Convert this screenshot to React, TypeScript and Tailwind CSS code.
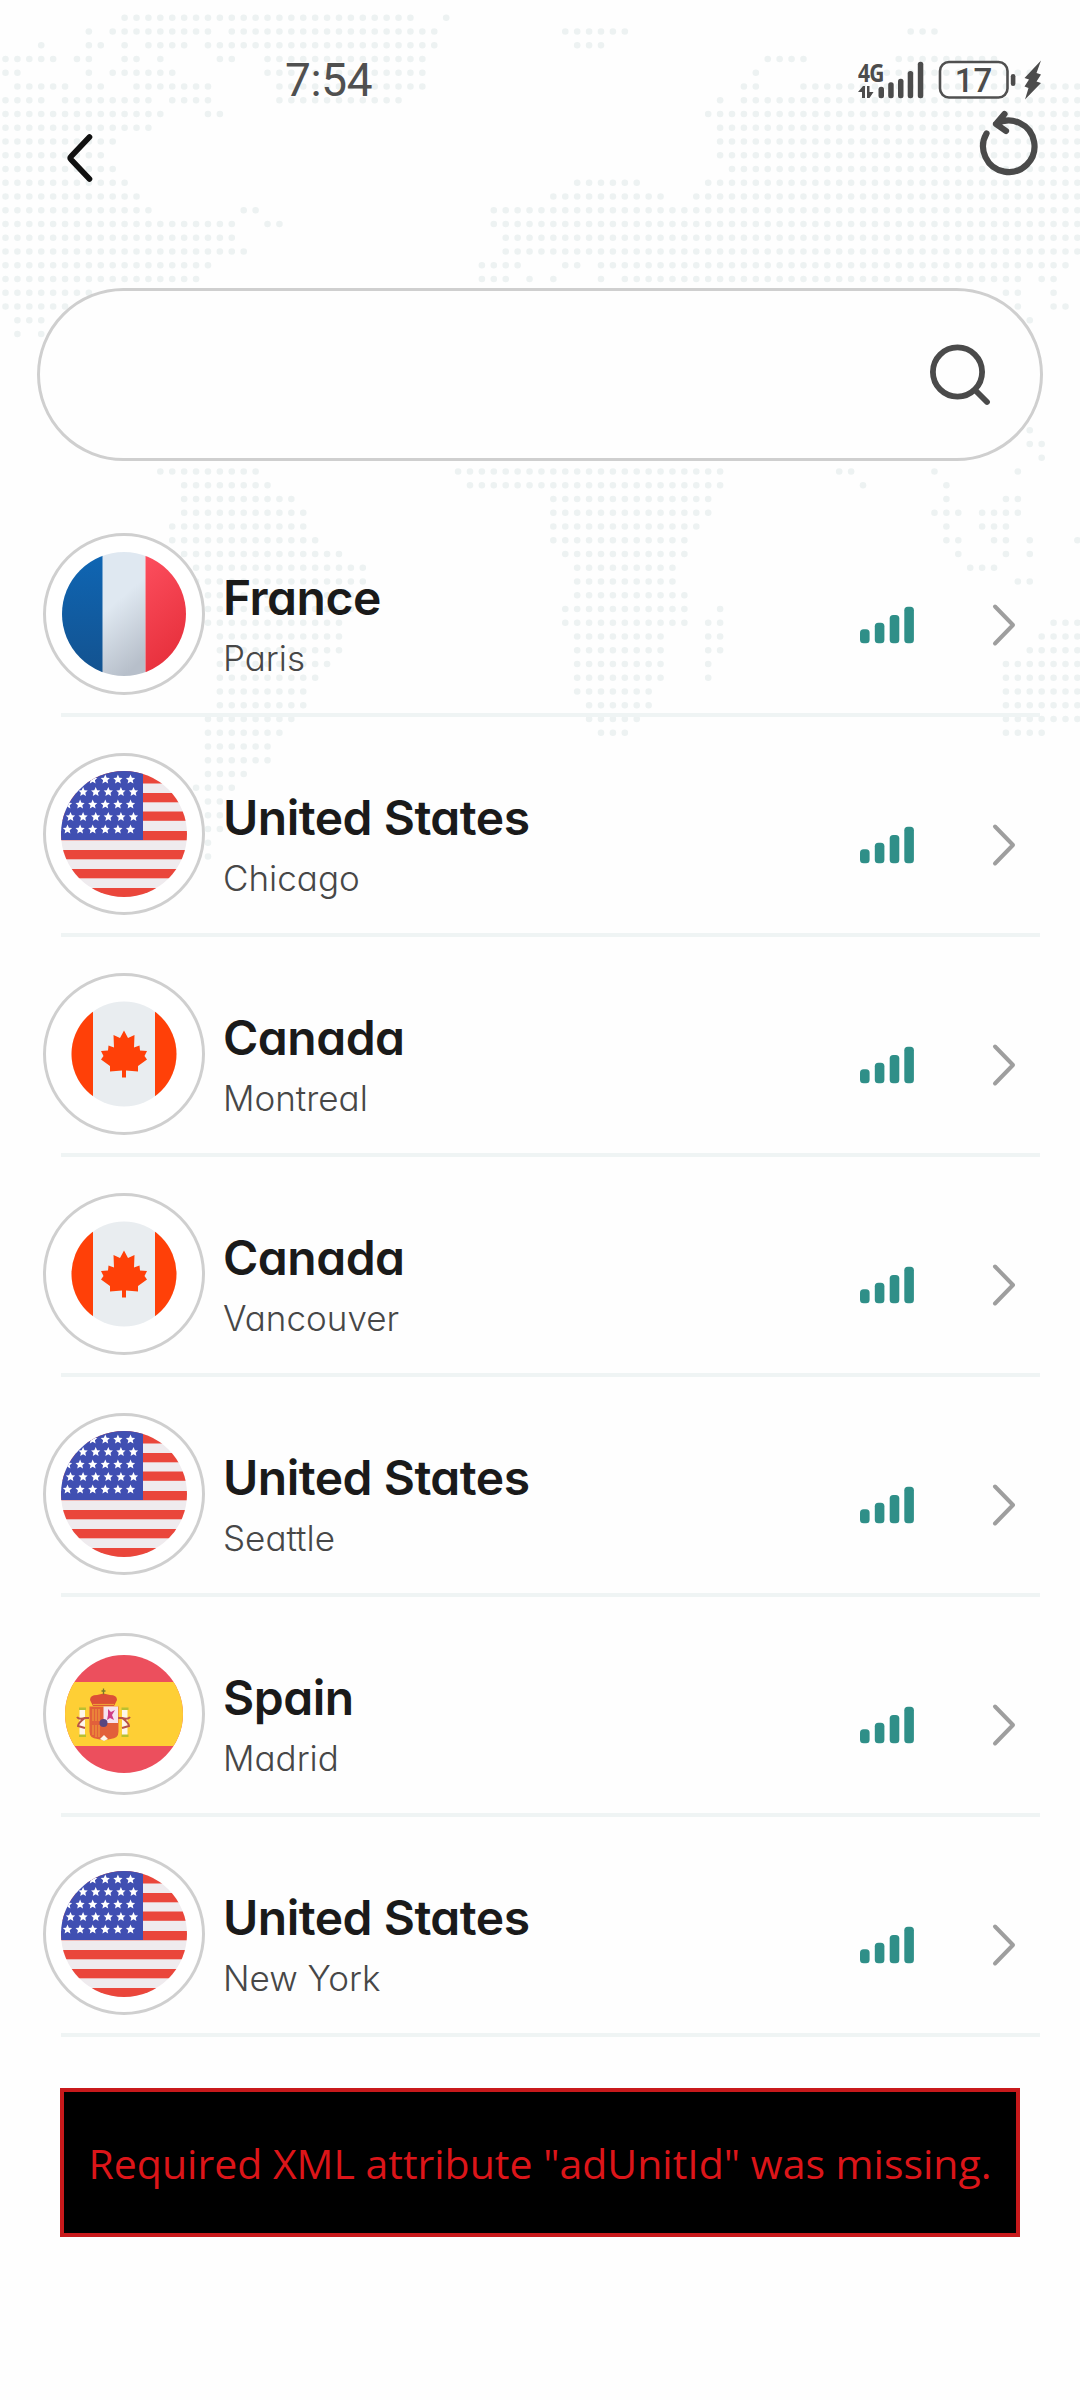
import { ReactNode } from "react";

type FlagCode = "fr" | "us" | "ca" | "es";

interface Server {
  id: number;
  country: string;
  city: string;
  flag: FlagCode;
}

const SERVERS: Server[] = [
  { id: 1, country: "France", city: "Paris", flag: "fr" },
  { id: 2, country: "United States", city: "Chicago", flag: "us" },
  { id: 3, country: "Canada", city: "Montreal", flag: "ca" },
  { id: 4, country: "Canada", city: "Vancouver", flag: "ca" },
  { id: 5, country: "United States", city: "Seattle", flag: "us" },
  { id: 6, country: "Spain", city: "Madrid", flag: "es" },
  { id: 7, country: "United States", city: "New York", flag: "us" },
];

// Dotted world map: row number -> [first column, last column] runs
const MAP_ROWS: Record<number, number[][]> = {
  0: [[10, 34], [37, 37]],
  1: [[7, 7], [9, 17], [19, 36], [47, 52], [76, 78]],
  2: [[3, 3], [7, 8], [10, 10], [12, 15], [17, 36], [48, 50]],
  3: [[0, 4], [6, 7], [10, 11], [13, 13], [18, 19], [22, 35], [64, 67], [75, 83]],
  4: [[0, 1], [7, 7], [9, 14], [22, 35], [63, 63], [73, 86]],
  5: [[1, 5], [7, 8], [11, 17], [23, 35], [62, 63], [67, 90]],
  6: [[0, 3], [5, 12], [14, 17], [23, 33], [60, 60], [62, 90]],
  7: [[0, 13], [17, 18], [59, 90]],
  8: [[0, 12], [60, 90]],
  9: [[0, 9], [60, 90]],
  10: [[0, 8], [60, 90]],
  11: [[0, 9], [61, 90]],
  12: [[0, 10], [48, 53], [59, 90]],
  13: [[0, 11], [46, 55], [58, 90]],
  14: [[0, 12], [20, 21], [41, 90]],
  15: [[0, 19], [22, 23], [41, 90]],
  16: [[0, 19], [42, 90]],
  17: [[0, 20], [42, 90]],
  18: [[0, 17], [40, 43], [47, 48], [50, 89]],
  19: [[0, 16], [40, 42], [44, 44], [46, 46], [50, 50], [52, 85], [87, 88]],
  20: [[0, 7], [84, 85], [88, 88]],
  21: [[0, 5], [85, 85], [88, 89]],
  22: [[1, 3], [86, 86]],
  23: [[1, 1], [3, 3]],
  30: [[86, 86]],
  31: [[86, 87]],
  32: [[87, 87]],
  33: [[13, 21], [38, 60], [70, 71], [78, 78], [85, 85]],
  34: [[15, 22], [39, 60], [72, 72], [79, 79]],
  35: [[15, 24], [46, 59], [79, 79], [84, 85]],
  36: [[15, 25], [46, 59], [78, 80], [82, 85]],
  37: [[14, 25], [46, 58], [79, 79], [82, 84]],
  38: [[14, 26], [46, 57], [79, 80], [83, 84], [86, 86], [90, 90]],
  39: [[14, 28], [47, 57], [80, 80], [84, 84], [86, 86]],
  40: [[14, 30], [48, 56], [81, 83]],
  41: [[15, 30], [48, 56], [85, 86]],
  42: [[16, 29], [48, 57]],
  43: [[16, 29], [47, 57], [60, 60]],
  44: [[16, 28], [47, 57], [59, 60], [88, 90]],
  45: [[18, 28], [48, 55], [59, 60], [87, 90]],
  46: [[18, 28], [48, 55], [59, 60], [86, 90]],
  47: [[18, 27], [48, 55], [59, 59], [84, 90]],
  48: [[18, 26], [48, 55], [59, 59], [84, 90]],
  49: [[18, 25], [48, 54], [84, 90]],
  50: [[18, 25], [49, 54], [84, 90]],
  51: [[17, 24], [49, 53], [84, 90]],
  52: [[17, 23], [50, 52], [84, 87]],
  53: [[17, 22]],
  54: [[17, 22]],
  55: [[17, 20]],
  56: [[16, 19]],
  57: [[17, 18]],
  58: [[16, 18]],
  59: [[16, 18]],
  60: [[16, 17]],
  61: [[17, 17]],
};

const DOT_X = 11.91;
const DOT_Y = 13.75;

function WorldMap() {
  return (
    <svg className="absolute left-0 top-0" width="1080" height="900" viewBox="0 0 1080 900">
      {Object.entries(MAP_ROWS).map(([row, runs]) =>
        runs.map(([from, to]) => {
          const y = 17.7 + Number(row) * DOT_Y;
          return (
            <line
              key={`${row}-${from}`}
              x1={5.5 + from * DOT_X}
              x2={5.6 + to * DOT_X}
              y1={y}
              y2={y}
              stroke="#edf2f2"
              strokeWidth="6.6"
              strokeLinecap="round"
              strokeDasharray={`0 ${DOT_X}`}
            />
          );
        })
      )}
    </svg>
  );
}

function StatusBar() {
  return (
    <div className="flex h-[64px] items-start justify-between pl-[285px] pr-[36px]">
      <span className="-mt-px font-[Roboto] text-[46px] leading-[54px] tracking-[-0.4px] text-[#505050]">7:54</span>
      <div className="flex pt-[6px]">
        <div className="flex h-[40px] w-[26px] flex-col">
          <span className="h-[22px] origin-left scale-x-[0.84] font-['Open_Sans'] text-[25px] font-bold leading-[24px] tracking-[-1px] text-[#4c4c4c]">
            4G
          </span>
          <svg width="18" height="14" viewBox="0 0 18 14" className="mt-[4px]" fill="#4c4c4c">
            <path d="M0 6 5 0h2v12H4V6zM9 0h2.500v6h4l-4 6H9z" />
          </svg>
        </div>
        <svg width="166" height="40" viewBox="878 60 166 40" className="-ml-[6px]">
          <g fill="#4c4c4c">
            <rect x="878.500" y="86.700" width="5.500" height="11.600" rx="2.500" />
            <rect x="888.200" y="82.300" width="5.500" height="16" rx="2.500" />
            <rect x="898" y="78.700" width="5.500" height="19.600" rx="2.500" />
            <rect x="907.700" y="71" width="5.500" height="27.300" rx="2.500" />
            <rect x="917.800" y="61.700" width="5.500" height="36.600" rx="2.500" />
            <rect x="1010.800" y="74" width="4.600" height="12" rx="2.300" />
            <path d="M1041 60.500 1024.500 78l4.500 1.500-4.500 7 4 1.500-3.500 11.500L1041 83l-4.500-1.500 4.500-7-4.500-1.500z" />
          </g>
          <rect x="940" y="62" width="67.500" height="35.500" rx="9" fill="none" stroke="#505050" strokeWidth="2.600" />
          <text x="973.500" y="91.500" textAnchor="middle" fontFamily="Roboto" fontSize="33" fontWeight="500" fill="#4c4c4c">
            17
          </text>
        </svg>
      </div>
    </div>
  );
}

function Header() {
  return (
    <div className="flex h-[170px] items-start justify-between pl-[60px] pr-[36px]">
      <svg width="40" height="60" viewBox="60 128 40 60" className="mt-[10px]" fill="none">
        <path d="M89.500 137 71 156.500q-1.500 1.500 0 3L89.500 179" stroke="#111" strokeWidth="5.600" strokeLinecap="round" strokeLinejoin="round" />
      </svg>
      <svg width="70" height="76" viewBox="974 106 70 76" className="-mt-[12px]" fill="none" stroke="#4a4a4a" strokeWidth="6.200" strokeLinecap="round" strokeLinejoin="round">
        <path d="M986.500 133.500A25.700 25.700 0 1 0 996 124L1006 131M996 124 1004.500 114" />
      </svg>
    </div>
  );
}

function SearchBox() {
  return (
    <div className="relative mx-[37px] flex h-[173px] items-center justify-end rounded-full border-[3px] border-[#cfcfcf] bg-[#fefefe] pr-[47px]">
      <svg width="68" height="68" viewBox="926 341 68 68" fill="none" stroke="#4a4a4a" strokeWidth="5.800">
        <circle cx="958.500" cy="372" r="24.600" />
        <path d="m976 390 12 12" strokeLinecap="round" />
      </svg>
    </div>
  );
}

const STAR = "M0-4.600 1.400-1.500 4.600-1.200 2.200 1 2.900 4.200 0 2.500-2.900 4.200-2.200 1-4.600-1.200-1.400-1.500z";

const FLAGS: Record<FlagCode, ReactNode> = {
  fr: (
    <>
      <clipPath id="clip-fr">
        <circle r="62" />
      </clipPath>
      <linearGradient id="fr-blue" x1="0" y1="0" x2="0" y2="1">
        <stop offset="0" stopColor="#0f66b4" />
        <stop offset="1" stopColor="#13528f" />
      </linearGradient>
      <linearGradient id="fr-white" x1="0.200" y1="0" x2="0.500" y2="1">
        <stop offset="0.400" stopColor="#dfe8f1" />
        <stop offset="1" stopColor="#b7bfca" />
      </linearGradient>
      <linearGradient id="fr-red" x1="0" y1="0" x2="0.300" y2="1">
        <stop offset="0" stopColor="#fd4f5f" />
        <stop offset="1" stopColor="#e7303c" />
      </linearGradient>
      <g clipPath="url(#clip-fr)">
        <rect x="-62" y="-62" width="41" height="124" fill="url(#fr-blue)" />
        <rect x="-21.500" y="-62" width="43" height="124" fill="url(#fr-white)" />
        <rect x="21.500" y="-62" width="41" height="124" fill="url(#fr-red)" />
      </g>
    </>
  ),
  us: (
    <>
      <clipPath id="clip-us">
        <circle r="63" />
      </clipPath>
      <g clipPath="url(#clip-us)">
        <rect x="-63" y="-63" width="126" height="126" fill="#efebee" />
        {[-70, -41, -22.5, -3, 16, 35, 54].map((y, i) => (
          <rect key={y} x="-63" y={y} width="126" height={i === 0 ? 19.5 : 9.3} fill="#ea463b" />
        ))}
        <rect x="-63" y="-63" width="82" height="69" fill="#404fb2" />
        {[0, 1, 2, 3, 4].map((row) =>
          [0, 1, 2, 3, 4, 5].map((col) => (
            <path
              key={`${row}-${col}`}
              d={STAR}
              fill="#fff"
              transform={`translate(${(row % 2 ? -53.5 : -56.5) + col * 12.6} ${-54.8 + row * 12.5})`}
            />
          ))
        )}
      </g>
    </>
  ),
  ca: (
    <>
      <clipPath id="clip-ca">
        <circle r="52.500" />
      </clipPath>
      <g clipPath="url(#clip-ca)">
        <rect x="-53" y="-53" width="106" height="106" fill="#e9edf0" />
        <rect x="-53" y="-53" width="22" height="106" fill="#ff4008" />
        <rect x="31" y="-53" width="22" height="106" fill="#ff4008" />
      </g>
      <path
        d="M0-23.500 4-16 10.500-19 10-6.500 15.500-8.500 16-3.500 23-3 20.500 2 23 5.500 14 12 14 17.500 2 16.500 2 23.500-2 23.500-2 16.500-14 17.500-14 12-23 5.500-20.500 2-23-3-16-3.500-15.500-8.500-10-6.500-10.500-19-4-16z"
        fill="#ff4008"
      />
    </>
  ),
  es: (
    <>
      <clipPath id="clip-es">
        <circle r="59" />
      </clipPath>
      <g clipPath="url(#clip-es)">
        <rect x="-59" y="-59" width="118" height="118" fill="#ec4f5d" />
        <rect x="-59" y="-32" width="118" height="64" fill="#fecf35" />
      </g>
      <rect x="-44.500" y="-5" width="5.500" height="26" fill="#fdf6ea" />
      <rect x="-2" y="-5" width="5.500" height="26" fill="#fdf6ea" />
      <path d="M-45-6.500h7v2.500h-7zM-2.500-6.500h7v2.500h-7zM-45 20.500h7v2.500h-7zM-2.500 20.500h7v2.500h-7z" fill="#b8c030" />
      <path d="M-47 3q2 3 8 1h4M-39 4q-7 5-7 8l7 2M6 3q-2 3-8 1h-4M-2 4q7 5 7 8l-7 2" stroke="#b85348" strokeWidth="2" fill="none" />
      <path d="M-34.500-7.500h29v25q0 7-8 7.500l-6.500 1.500-6.500-1.500q-8-.5-8-7.500z" fill="#e2603a" />
      <path d="M-20.500-7.500H-6V9h-14.500z" fill="#f6e3f0" />
      <path d="M-16-5l3 3 4-2-3 5 2 5-4-2-3 2 1-5z" fill="#cf3d86" />
      <path d="M-31-5v12M-28-5v12M-25-5v12M-31 11v10M-28 11v12M-25 11v12" stroke="#f0a038" strokeWidth="1.100" />
      <path d="M-24 25l4-4 4 4-4 2z" fill="#fdf6ea" />
      <circle cx="-20.500" cy="9" r="4" fill="#5a4680" />
      <path d="M-31-8-34-14q0-5 7-5l6.500-1.500 6.500 1.500q7 0 7 5l-3 6z" fill="#dc4f36" />
      <path d="M-31-9.500h21" stroke="#f0a038" strokeWidth="1.200" />
      <path d="M-20.500-25.500v6M-22.500-23h4" stroke="#7a7a2a" strokeWidth="1.300" />
    </>
  ),
};

function ServerRow({ server }: { server: Server }) {
  return (
    <div className="relative h-[220px]">
      <div className="flex h-[216px] items-start pl-[43px]">
        <div className="mt-[36px] h-[162px] w-[162px] shrink-0 rounded-full border-[3px] border-[#cfcfcf] bg-white">
          <svg width="156" height="156" viewBox="-78 -78 156 156">
            {FLAGS[server.flag]}
          </svg>
        </div>
        <div className="ml-[18px] flex flex-1 flex-col pt-[71px] [font-feature-settings:'cv11']">
          <span className="text-[48px] font-semibold leading-[60px] tracking-[-0.5px] text-[#1a1a1a]">{server.country}</span>
          <span className="text-[35px] font-light leading-[60px] text-[#474747]">{server.city}</span>
        </div>
        <svg width="56" height="38" viewBox="860 606 56 38" className="mt-[109px]" fill="#2f8f88">
          <rect x="860" y="629.300" width="9.600" height="14" rx="3.500" />
          <rect x="874.800" y="622.700" width="9.600" height="20.600" rx="3.500" />
          <rect x="889.700" y="615" width="9.600" height="28.300" rx="3.500" />
          <rect x="904.300" y="606.800" width="9.600" height="36.500" rx="3.500" />
        </svg>
        <svg width="30" height="44" viewBox="990 603 30 44" className="ml-[74px] mr-[60px] mt-[106px]" fill="none">
          <path d="M995 606.500 1013 625 995 643.500" stroke="#9e9e9e" strokeWidth="4" strokeLinecap="round" strokeLinejoin="round" />
        </svg>
      </div>
      <div className="ml-[61px] mr-[40px] h-[4px] bg-[#eff4f4]" />
    </div>
  );
}

export default function App() {
  return (
    <div className="relative h-[2400px] w-[1080px] overflow-hidden bg-[#fefefe] font-[Inter,sans-serif]">
      <WorldMap />
      <div className="relative flex flex-col pt-[54px]">
        <StatusBar />
        <Header />
        <SearchBox />
        <div className="mt-[36px]">
          {SERVERS.map((server) => (
            <ServerRow key={server.id} server={server} />
          ))}
        </div>
        <div className="mx-[60px] mt-[51px] flex h-[149px] items-center justify-center border-4 border-[#c8191b] bg-black">
          <span className="whitespace-nowrap font-['Open_Sans'] text-[41px] leading-[60px] text-[#dc1519]">
            Required XML attribute "adUnitId" was missing.
          </span>
        </div>
      </div>
    </div>
  );
}
